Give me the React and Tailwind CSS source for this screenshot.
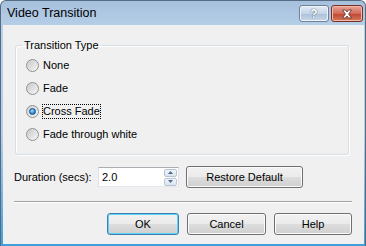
const options = ["None", "Fade", "Cross Fade", "Fade through white"];

const Radio = ({ checked }) => (
  <span className="w-[13px] h-[13px] shrink-0 rounded-full border border-[#8f9092] bg-[linear-gradient(135deg,#cfd0d2,#f6f6f6)] flex items-center justify-center">
    <span
      className={
        checked
          ? "w-[7px] h-[7px] rounded-full border border-[#1b4f86] bg-[radial-gradient(circle_at_40%_35%,#a6e3ff,#2b8ad6_60%,#11457e)]"
          : "w-[9px] h-[9px] rounded-full bg-[linear-gradient(135deg,#c9cacb,#f4f4f4)]"
      }
    />
  </span>
);

const Button = ({ children, className = "", primary }) => (
  <button
    className={`h-[22px] rounded-[3px] border ${
      primary ? "border-[#3c7fb1] shadow-[inset_0_0_0_1px_#5fd2fa]" : "border-[#707070] shadow-[inset_0_0_0_1px_#fbfbfb]"
    } bg-[linear-gradient(#f2f2f2_0%,#ebebeb_48%,#dddddd_52%,#cfcfcf_100%)] text-[11px] text-black leading-none flex items-center justify-center ${className}`}
  >
    {children}
  </button>
);

export default function App() {
  return (
    <div className="w-[366px] h-[246px] overflow-hidden bg-white font-['Liberation_Sans',Arial,sans-serif]">
      <div className="w-[366px] h-[246px] flex flex-col rounded-t-[6px] border-t border-l border-r border-[#556b84] bg-[linear-gradient(#a6c0dc_0%,#b9d1ea_12%,#b4cde8_55%,#3f9fd9_100%)]">
        <div className="h-[24px] shrink-0 flex items-start justify-between pl-[6px] pr-[2px]">
          <span className="mt-[6px] text-[12.5px] leading-[12px] text-black">Video Transition</span>
          <div className="mt-[4px] flex gap-[2px]">
            <div className="w-[30px] h-[17px] rounded-[3px] border border-[#6f8298] bg-[linear-gradient(#e4ecf5,#c3d4e7_50%,#abc1da_52%,#c8d8ea)] flex items-center justify-center shadow-[inset_0_0_0_1px_#eef3f9]">
              <span className="text-[12px] leading-none font-bold text-white [text-shadow:0_0_1px_#45566b,0_0_1px_#45566b]">?</span>
            </div>
            <div className="w-[32px] h-[17px] rounded-[3px] border border-[#7a2e26] bg-[linear-gradient(#e8a597,#d06a5a_50%,#c0442f_52%,#d57a5c)] flex items-center justify-center shadow-[inset_0_0_0_1px_#efb8a9]">
              <svg width="12" height="10" viewBox="0 0 12 10">
                <path d="M1.5 1 L4.5 1 L6 3 L7.5 1 L10.5 1 L7.6 5 L10.5 9 L7.5 9 L6 7 L4.5 9 L1.5 9 L4.4 5 Z" fill="#ffffff" stroke="#5b2a24" strokeWidth="0.8" strokeLinejoin="round" />
              </svg>
            </div>
          </div>
        </div>
        <div className="flex-1 ml-[2px] mr-[1px] mb-[2px] bg-[#f0f0f0] flex flex-col text-[11px] text-black">
          <fieldset className="mt-[14px] ml-[12px] mr-[15px] border border-[#d5dfe5] rounded-[3px] shadow-[inset_1px_1px_0_#ffffff,1px_1px_0_#ffffff] pb-[8px]">
            <legend className="ml-[6px] px-[2px] leading-[13px]">Transition Type</legend>
            <div className="pt-[2px] pl-[10px] flex flex-col">
              {options.map((o) => (
                <div key={o} className="h-[23px] flex items-center gap-[3px]">
                  <Radio checked={o === "Cross Fade"} />
                  <span
                    className={`border leading-[13px] ${
                      o === "Cross Fade" ? "border-dotted border-black" : "border-transparent"
                    }`}
                  >
                    {o}
                  </span>
                </div>
              ))}
            </div>
          </fieldset>
          <div className="mt-[11px] pl-[11px] flex items-center">
            <span className="w-[84px]">Duration (secs):</span>
            <div className="w-[81px] h-[20px] border border-[#abadb3] border-b-[#e3e9ef] border-x-[#e2e3ea] bg-white flex items-center justify-between pl-[3px] pr-[1px]">
              <span>2.0</span>
              <div className="flex flex-col gap-[1px]">
                <div className="w-[13px] h-[8px] border border-[#b9c4d3] rounded-[2px] bg-[linear-gradient(#f3f6fa,#dbe3ee)] flex items-center justify-center">
                  <svg width="5" height="3" viewBox="0 0 5 3"><path d="M0 3 L2.5 0 L5 3 Z" fill="#4c6896" /></svg>
                </div>
                <div className="w-[13px] h-[8px] border border-[#b9c4d3] rounded-[2px] bg-[linear-gradient(#f3f6fa,#dbe3ee)] flex items-center justify-center">
                  <svg width="5" height="3" viewBox="0 0 5 3"><path d="M0 0 L5 0 L2.5 3 Z" fill="#4c6896" /></svg>
                </div>
              </div>
            </div>
            <Button className="ml-[7px] w-[117px] h-[21px]">Restore Default</Button>
          </div>
          <div className="mt-[13px] ml-[11px] mr-[12px] border-t border-[#a0a0a0] border-b border-b-white" />
          <div className="mt-[10px] mr-[12px] flex justify-end gap-[8px]">
            <Button primary className="w-[72px]">OK</Button>
            <Button className="w-[79px]">Cancel</Button>
            <Button className="w-[78px]">Help</Button>
          </div>
        </div>
      </div>
    </div>
  );
}
